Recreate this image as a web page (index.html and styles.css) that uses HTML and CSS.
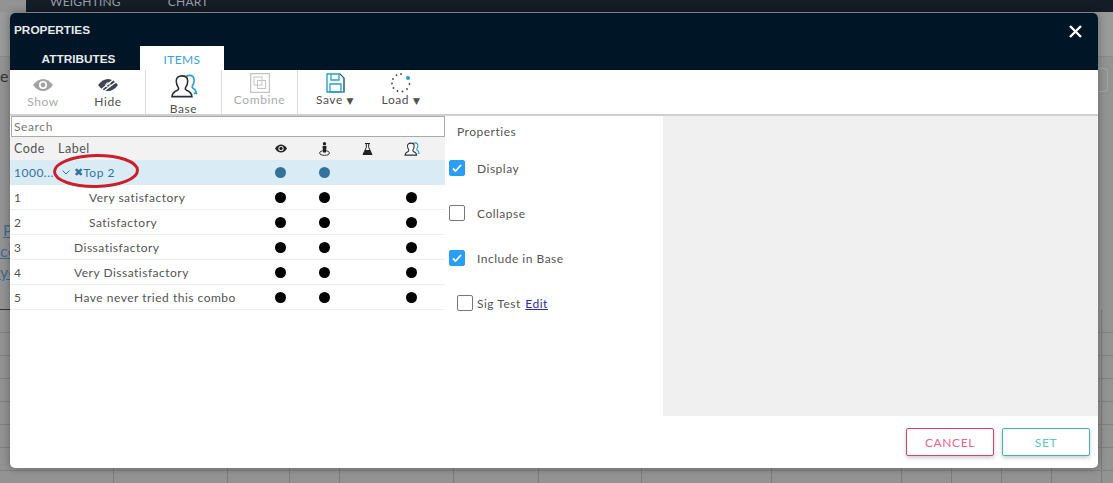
FILE: index.html
```html
<!DOCTYPE html>
<html lang="en">
<head>
    <meta charset="UTF-8">
    <meta name="viewport" content="width=device-width, initial-scale=1.0">
    <title>Properties</title>
    <link rel="stylesheet" href="styles.css">
</head>
<body>

    <!-- Page behind the dialog -->
    <div class="backdrop">
        <div class="top-nav">
            <span class="nav-item nav-weighting">WEIGHTING</span>
            <span class="nav-item">CHART</span>
        </div>
        <div class="sub-nav"></div>
        <div class="intro">
            <p class="intro-letter">e</p>
            <a class="intro-link intro-first" href="#">P</a>
            <a class="intro-link" href="#">co</a>
            <a class="intro-link" href="#">yo</a>
        </div>
        <div class="sheet">
            <div class="sheet-col col-a"></div>
            <div class="sheet-col col-a"></div>
            <div class="sheet-col col-b"></div>
            <div class="sheet-col col-c"></div>
            <div class="sheet-col col-a"></div>
            <div class="sheet-col col-d"></div>
            <div class="sheet-col col-e"></div>
            <div class="sheet-col col-f"></div>
            <div class="sheet-col col-f"></div>
            <div class="sheet-col col-g"></div>
            <div class="sheet-col col-g"></div>
            <div class="sheet-col col-g"></div>
            <div class="sheet-col col-g"></div>
        </div>
        <div class="page-search"></div>
    </div>

    <!-- Dialog -->
    <div class="modal">
        <div class="modal-header">
            <div class="title-row">
                <span class="modal-title">PROPERTIES</span>
                <svg class="close-icon" width="13" height="13" viewBox="0 0 13 13">
                    <path d="M1 1l11 11M12 1L1 12" stroke="#fff" stroke-width="2.4" fill="none"/>
                </svg>
            </div>
            <div class="tabs">
                <div class="tab">ATTRIBUTES</div>
                <div class="tab tab-active">ITEMS</div>
            </div>
        </div>

        <div class="toolbar">
            <div class="tool-group group-view">
                <div class="tool tool-show disabled">
                    <svg width="20" height="12" viewBox="0 0 20 12">
                        <path d="M0 6c3-4 6.500-6 10-6s7 2 10 6c-3 4-6.500 6-10 6S3 10 0 6z" fill="#a3a3a3"/>
                        <circle cx="10" cy="6" r="4" fill="#fff"/>
                        <circle cx="10" cy="6" r="2.400" fill="#a3a3a3"/>
                    </svg>
                    <span>Show</span>
                </div>
                <div class="tool tool-hide">
                    <svg width="20" height="12" viewBox="0 0 20 12">
                        <path d="M0 6c3-4 6.500-6 10-6s7 2 10 6c-3 4-6.500 6-10 6S3 10 0 6z" fill="#3d4650"/>
                        <path d="M4 10L15 1M6 12L18 3" stroke="#fff" stroke-width="1.200"/>
                        <circle cx="10" cy="6" r="2.200" fill="none" stroke="#fff" stroke-width="1"/>
                    </svg>
                    <span>Hide</span>
                </div>
            </div>
            <div class="tool-group group-base">
                <div class="tool tool-base">
                    <svg width="30" height="26" viewBox="0 0 30 26">
                        <path d="M16 5c.5-2 2.500-3.500 5-3.500 3.500 0 5 2.500 5 5.500 0 2.500-.8 4.500-2 6-.5 1.200 0 2 1 2.500 2 1 3 2.500 3.500 5.500h-3" fill="none" stroke="#2a9fd0" stroke-width="1.700"/>
                        <path d="M2 24.500c0-4 2-5.500 6-7 1-.5 1.500-1.500.8-3-1.500-2-2.200-4.500-2.200-7C6.600 4 9 2 12.800 2S19 4 19 7.500c0 2.500-.7 5-2.200 7-.7 1.500-.2 2.500.8 3 4 1.500 6 3 6 7z" fill="#fff" stroke="#2b2f33" stroke-width="1.700"/>
                    </svg>
                    <span>Base</span>
                </div>
            </div>
            <div class="tool-group group-combine">
                <div class="tool tool-file disabled">
                    <svg width="20" height="20" viewBox="0 0 20 20">
                        <rect x="0.500" y="0.500" width="19" height="19" fill="none" stroke="#c4c4c4" stroke-width="1.500"/>
                        <rect x="4" y="4" width="8" height="8" fill="none" stroke="#c4c4c4"/>
                        <rect x="7.500" y="7.500" width="8" height="8" fill="none" stroke="#c4c4c4"/>
                    </svg>
                    <span>Combine</span>
                </div>
            </div>
            <div class="tool tool-file tool-save">
                <svg width="19" height="20" viewBox="0 0 19 20">
                    <path d="M1 1h13l4 4v14H1z" fill="none" stroke="#2a9fc8" stroke-width="1.400"/>
                    <path d="M14 1l4 4v14" fill="none" stroke="#555" stroke-width="1"/>
                    <path d="M5 1v6h8V1M4 11h11v8H4z" fill="none" stroke="#2a9fc8" stroke-width="1.300"/>
                </svg>
                <span>Save <i class="caret">&#9660;</i></span>
            </div>
            <div class="tool tool-file tool-load">
                <svg width="20" height="20" viewBox="0 0 20 20">
                    <g fill="#444">
                        <circle cx="10" cy="1" r=".9"/>
                        <circle cx="5.500" cy="2.200" r=".9"/>
                        <circle cx="2" cy="6" r=".9"/>
                        <circle cx="1" cy="10.500" r=".9"/>
                        <circle cx="2.500" cy="15" r=".9"/>
                        <circle cx="6.500" cy="18" r=".9"/>
                        <circle cx="11.500" cy="18.500" r=".9"/>
                        <circle cx="16" cy="16" r=".9"/>
                        <circle cx="18.500" cy="11" r=".9"/>
                    </g>
                    <circle cx="17" cy="5" r="2" fill="#2a9fc8"/>
                </svg>
                <span>Load <i class="caret">&#9660;</i></span>
            </div>
        </div>

        <div class="modal-body">
            <div class="items-panel">
                <input class="search" type="text" placeholder="Search">
                <div class="row row-head">
                    <div class="cell-code">Code</div>
                    <div class="cell-label">Label</div>
                    <div class="cell-mark">
                        <svg width="12" height="9" viewBox="0 0 12 9">
                            <path d="M0 4.500C2 1.500 4 .5 6 .5s4 1 6 4c-2 3-4 4-6 4s-4-1-6-4z" fill="#222"/>
                            <circle cx="6" cy="4.500" r="2.600" fill="#fff"/>
                            <circle cx="6" cy="4.500" r="1.700" fill="#222"/>
                        </svg>
                    </div>
                    <div class="cell-mark">
                        <svg width="11" height="14" viewBox="0 0 11 14">
                            <circle cx="5.500" cy="1.800" r="1.700" fill="#222"/>
                            <path d="M3.500 4h4l-.5 6.500H4z" fill="#222"/>
                            <ellipse cx="5.500" cy="11" rx="4.800" ry="2.300" fill="none" stroke="#222" stroke-width=".9"/>
                        </svg>
                    </div>
                    <div class="cell-mark">
                        <svg width="11" height="12" viewBox="0 0 11 12">
                            <path d="M3 .5h5M4.300 1v3.500L1 11.500h9l-3.300-7V1" fill="none" stroke="#222"/>
                            <path d="M3.200 7h4.600l2 4.500H1.200z" fill="#222"/>
                        </svg>
                    </div>
                    <div class="cell-mark">
                        <svg width="16" height="14" viewBox="0 0 30 26">
                            <path d="M16 5c.5-2 2.500-3.500 5-3.500 3.500 0 5 2.500 5 5.500 0 2.500-.8 4.500-2 6-.5 1.200 0 2 1 2.500 2 1 3 2.500 3.500 5.500h-3" fill="none" stroke="#2a9fd0" stroke-width="2"/>
                            <path d="M2 24.500c0-4 2-5.500 6-7 1-.5 1.500-1.500.8-3-1.500-2-2.200-4.500-2.200-7C6.600 4 9 2 12.800 2S19 4 19 7.500c0 2.500-.7 5-2.200 7-.7 1.500-.2 2.500.8 3 4 1.500 6 3 6 7z" fill="#fff" stroke="#2b2f33" stroke-width="2"/>
                        </svg>
                    </div>
                </div>
                <div class="row row-selected">
                    <div class="cell-code">1000...</div>
                    <div class="cell-label label-group">
                        <svg class="chevron" width="8" height="5" viewBox="0 0 8 5">
                            <path d="M.5.5L4 4 7.500.5" fill="none" stroke="#34729a"/>
                        </svg>
                        <span class="cross">&#10006;</span>Top 2
                    </div>
                    <div class="cell-mark"><span class="dot"></span></div>
                    <div class="cell-mark"><span class="dot"></span></div>
                    <div class="cell-mark"></div>
                    <div class="cell-mark"></div>
                </div>
                <div class="row">
                    <div class="cell-code">1</div>
                    <div class="cell-label indent-2">Very satisfactory</div>
                    <div class="cell-mark"><span class="dot"></span></div>
                    <div class="cell-mark"><span class="dot"></span></div>
                    <div class="cell-mark"></div>
                    <div class="cell-mark"><span class="dot"></span></div>
                </div>
                <div class="row">
                    <div class="cell-code">2</div>
                    <div class="cell-label indent-2">Satisfactory</div>
                    <div class="cell-mark"><span class="dot"></span></div>
                    <div class="cell-mark"><span class="dot"></span></div>
                    <div class="cell-mark"></div>
                    <div class="cell-mark"><span class="dot"></span></div>
                </div>
                <div class="row">
                    <div class="cell-code">3</div>
                    <div class="cell-label indent-1">Dissatisfactory</div>
                    <div class="cell-mark"><span class="dot"></span></div>
                    <div class="cell-mark"><span class="dot"></span></div>
                    <div class="cell-mark"></div>
                    <div class="cell-mark"><span class="dot"></span></div>
                </div>
                <div class="row">
                    <div class="cell-code">4</div>
                    <div class="cell-label indent-1">Very Dissatisfactory</div>
                    <div class="cell-mark"><span class="dot"></span></div>
                    <div class="cell-mark"><span class="dot"></span></div>
                    <div class="cell-mark"></div>
                    <div class="cell-mark"><span class="dot"></span></div>
                </div>
                <div class="row">
                    <div class="cell-code">5</div>
                    <div class="cell-label indent-1">Have never tried this combo</div>
                    <div class="cell-mark"><span class="dot"></span></div>
                    <div class="cell-mark"><span class="dot"></span></div>
                    <div class="cell-mark"></div>
                    <div class="cell-mark"><span class="dot"></span></div>
                </div>
                <svg class="highlight" width="90" height="38" viewBox="0 0 90 38">
                    <ellipse cx="45" cy="19" rx="41.500" ry="15.500" fill="none" stroke="#c9202c" stroke-width="3" transform="rotate(-1 45 19)"/>
                </svg>
            </div>

            <div class="props-panel">
                <div class="props-title">Properties</div>
                <div class="prop">
                    <span class="check checked"><svg width="10" height="8" viewBox="0 0 10 8"><path d="M1 4.500l2.500 2.500L9 1" fill="none" stroke="#fff" stroke-width="1.800"/></svg></span>
                    Display
                </div>
                <div class="prop">
                    <span class="check"></span>
                    Collapse
                </div>
                <div class="prop">
                    <span class="check checked"><svg width="10" height="8" viewBox="0 0 10 8"><path d="M1 4.500l2.500 2.500L9 1" fill="none" stroke="#fff" stroke-width="1.800"/></svg></span>
                    Include in Base
                </div>
                <div class="prop prop-sig">
                    <span class="check"></span>
                    <span>Sig Test <a class="edit-link" href="#">Edit</a></span>
                </div>
            </div>

            <div class="side-panel"></div>
        </div>

        <div class="modal-footer">
            <button class="btn btn-cancel" type="button">CANCEL</button>
            <button class="btn btn-set" type="button">SET</button>
        </div>
    </div>

</body>
</html>
```

FILE: styles.css
```css
html, body {
    height: 100%;
}

body {
    margin: 0;
    font-family: 'Lato', 'Noto Sans', sans-serif;
    font-size: 12px;
    letter-spacing: 0.5px;
    color: #555;
    overflow: hidden;
}

/* Page behind the dialog */
.backdrop {
    height: 483px;
    background: #939393;
    display: flex;
    flex-direction: column;
    overflow: hidden;
}

.top-nav {
    height: 12px;
    margin-left: 26px;
    padding-left: 24px;
    background: #141c26;
    display: flex;
    align-items: flex-start;
    overflow: hidden;
    flex-shrink: 0;
}

.nav-item {
    font-size: 12px;
    line-height: 4px;
    letter-spacing: 0.2px;
    color: #9a9fa5;
}

.nav-weighting {
    margin-right: 47px;
}

.sub-nav {
    height: 44px;
    background: #9a9a9a;
    border-bottom: 1px solid #8a8a8a;
    flex-shrink: 0;
}

.intro {
    width: 10px;
    height: 253px;
    padding-top: 10px;
    box-sizing: border-box;
    border-bottom: 1px solid #333;
    display: flex;
    flex-direction: column;
    align-items: flex-start;
    font-size: 16px;
    overflow: hidden;
    flex-shrink: 0;
}

.intro-letter {
    margin: 0;
    color: #333;
    height: 152px;
    line-height: 18px;
}

.intro-link {
    color: #3f6c8c;
    height: 21px;
    line-height: 21px;
}

.intro-first {
    margin-left: 3px;
}

.sheet {
    flex: 1;
    display: flex;
    background: repeating-linear-gradient(to bottom, transparent 0, transparent 22px, #808080 22px, #808080 23px);
}

.sheet-col {
    box-sizing: border-box;
    border-right: 1px solid #7c7c7c;
    flex-shrink: 0;
}

.col-a { width: 114px; }
.col-b { width: 62px; }
.col-c { width: 50px; }
.col-d { width: 85px; }
.col-e { width: 103px; }
.col-f { width: 130px; }
.col-g { width: 50px; }

.page-search {
    position: absolute;
    left: 1090px;
    top: 68px;
    width: 16px;
    height: 22px;
    border: 1px solid #a5a5a5;
    border-radius: 4px;
}

/* Dialog */
.modal {
    position: absolute;
    left: 10px;
    top: 13px;
    width: 1088px;
    height: 455px;
    background: #fff;
    border-radius: 5px;
    box-shadow: 0 0 8px rgba(0, 0, 0, 0.35);
    display: flex;
    flex-direction: column;
    overflow: hidden;
}

.modal-header {
    height: 57px;
    background: #001626;
    color: #fff;
    flex-shrink: 0;
}

.title-row {
    height: 33px;
    padding: 0 16px 0 4px;
    display: flex;
    align-items: center;
    justify-content: space-between;
}

.modal-title {
    font-family: 'Liberation Sans', Arial, sans-serif;
    font-size: 11.8px;
    font-weight: bold;
    letter-spacing: 0;
    color: #e6e9ec;
}

.close-icon {
    margin-top: 4px;
}

.tabs {
    height: 24px;
    margin-left: 7px;
    display: flex;
}

.tab {
    width: 123px;
    line-height: 27px;
    text-align: center;
    font-family: 'Liberation Sans', Arial, sans-serif;
    font-size: 11.8px;
    font-weight: bold;
    letter-spacing: 0;
    color: #e6e9ec;
}

.tab-active {
    width: 84px;
    background: #fff;
    color: #3ba3d8;
    font-family: 'Lato', sans-serif;
    font-weight: normal;
    font-size: 12px;
    letter-spacing: 0.4px;
}

/* Toolbar */
.toolbar {
    height: 46px;
    box-sizing: border-box;
    border-bottom: 2px solid #cfcfcf;
    display: flex;
    flex-shrink: 0;
}

.tool-group {
    display: flex;
    box-sizing: border-box;
    height: 44px;
    border-right: 1px solid #ddd;
}

.group-view { width: 136px; }
.group-base { width: 76px; }
.group-combine { width: 76px; }

.tool {
    display: flex;
    flex-direction: column;
    align-items: center;
    font-size: 12px;
    letter-spacing: 0.6px;
    line-height: 14px;
    color: #505050;
    white-space: nowrap;
}

.tool svg {
    display: block;
}

.disabled {
    color: #aaa;
}

.tool-show {
    width: 66px;
    padding-top: 9px;
}

.tool-hide {
    width: 64px;
    padding-top: 9px;
}

.tool-show span, .tool-hide span {
    margin-top: 4px;
}

.tool-base {
    width: 75px;
    padding-top: 4px;
    line-height: 12px;
}

.tool-base span {
    margin-top: 4px;
    position: relative;
    top: 1px;
}

.tool-file {
    padding-top: 3px;
    width: 75px;
}

.tool-save {
    width: 74px;
}

.tool-load {
    width: 58px;
}

.caret {
    font-family: 'DejaVu Sans', sans-serif;
    font-style: normal;
    font-size: 9px;
}

/* Body */
.modal-body {
    height: 300px;
    display: flex;
    flex-shrink: 0;
}

.items-panel {
    width: 435px;
    position: relative;
    flex-shrink: 0;
}

.search {
    display: block;
    width: 434px;
    height: 21px;
    margin: 0 0 0 1px;
    padding: 0 2px;
    box-sizing: border-box;
    border: 1px solid #aaa;
    font-family: inherit;
    font-size: 12px;
    letter-spacing: 0.6px;
    outline: none;
}

.search::placeholder {
    color: #777;
}

.row {
    height: 25px;
    box-sizing: border-box;
    padding-right: 11px;
    border-bottom: 1px solid #eee;
    display: flex;
    align-items: center;
}

.row-head {
    height: 23px;
    background: #f2f2f2;
    border-bottom: none;
    font-size: 12.5px;
}

.row-selected {
    height: 25px;
    background: #d9ecf6;
    border-bottom: none;
    color: #34729a;
}

.cell-code {
    width: 44px;
    padding-left: 4px;
    flex-shrink: 0;
}

.cell-label {
    width: 201px;
    flex-shrink: 0;
    white-space: nowrap;
    display: flex;
    align-items: center;
}

.indent-1 { padding-left: 16px; width: 185px; }
.indent-2 { padding-left: 31px; width: 170px; }

.label-group {
    padding-left: 4px;
    width: 197px;
}

.chevron {
    margin-right: 4px;
}

.cross {
    font-family: 'DejaVu Sans', sans-serif;
    font-size: 11px;
    letter-spacing: 0;
}

.cell-mark {
    width: 43.6px;
    flex-shrink: 0;
    display: flex;
    justify-content: center;
    align-items: center;
}

.dot {
    width: 11px;
    height: 11px;
    border-radius: 50%;
    background: #000;
}

.row-selected .dot {
    background: #34729a;
}

/* Ring drawn over the table */
.highlight {
    position: absolute;
    left: 41px;
    top: 36px;
}

.props-panel {
    width: 218px;
    flex-shrink: 0;
    padding-left: 4px;
    box-sizing: border-box;
}

.props-title {
    height: 44px;
    padding-left: 8px;
    line-height: 32px;
}

.prop {
    height: 45px;
    display: flex;
    align-items: flex-start;
    line-height: 18px;
}

.check {
    width: 16px;
    height: 16px;
    box-sizing: border-box;
    margin-right: 12px;
    border: 1px solid #777;
    border-radius: 2px;
    background: #fff;
    display: flex;
    align-items: center;
    justify-content: center;
    flex-shrink: 0;
}

.checked {
    background: #2a9df4;
    border-color: #2a9df4;
}

.prop-sig {
    padding-left: 8px;
}

.prop-sig .check {
    margin-right: 4px;
}

.edit-link {
    color: #2a2ab5;
    margin-left: 1px;
}

.side-panel {
    flex: 1;
    background: #f0f0f0;
}

/* Footer */
.modal-footer {
    flex: 1;
    padding: 12px 8px 0 0;
    display: flex;
    justify-content: flex-end;
    gap: 8px;
}

.btn {
    width: 88px;
    height: 28px;
    border-radius: 2px;
    background: #fff;
    font-family: inherit;
    font-size: 12px;
    letter-spacing: 0.6px;
    box-shadow: 0 2px 4px rgba(0, 0, 0, 0.2);
    cursor: pointer;
}

.btn-cancel {
    border: 1px solid #d9406e;
    color: #e9648f;
}

.btn-set {
    border: 1px solid #3fb8a8;
    color: #5cc8bc;
}
```
